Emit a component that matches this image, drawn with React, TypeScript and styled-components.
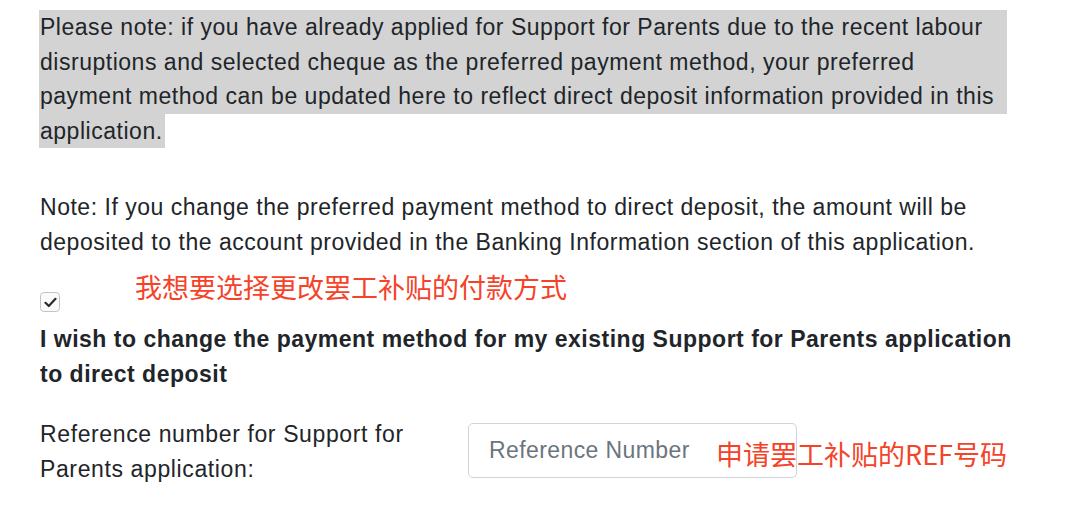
import styled, { createGlobalStyle } from "styled-components";

const GlobalStyle = createGlobalStyle`
  html, body {
    margin: 0;
    background: #ffffff;
  }
`;

const Page = styled.main`
  position: relative;
  width: 1080px;
  height: 512px;
  box-sizing: border-box;
  padding: 10px 40px 0;
  overflow: hidden;
  color: #212529;
  font-family: "Liberation Sans", Arial, sans-serif;
  font-size: 23px;
  line-height: 34.5px;
  letter-spacing: 0.52px;
`;

const Highlighted = styled.p`
  margin: 0 0 42px -1px;
`;

const HighlightBlock = styled.span`
  display: block;
  width: 967px;
  padding-left: 1px;
  background: #d3d3d3;
`;

const HighlightTail = styled.span`
  display: inline-block;
  padding: 0 2px 0 1px;
  background: #d3d3d3;
`;

const Paragraph = styled.p`
  margin: 0 0 33px;
`;

const CheckBox = styled.span`
  display: flex;
  align-items: center;
  justify-content: center;
  width: 20px;
  height: 20px;
  box-sizing: border-box;
  border: 1px solid #c4c4c4;
  border-radius: 4px;
  background: #fbfbfb;
  margin-bottom: 10px;
`;

const BoldLabel = styled.p`
  margin: 0 0 26px;
  font-weight: 700;
  letter-spacing: 0.5px;
`;

const FieldRow = styled.div`
  display: grid;
  grid-template-columns: 428px 329px;
  align-items: start;
`;

const FieldLabel = styled.label`
  display: block;
  letter-spacing: 0.62px;
`;

const Input = styled.input`
  margin-top: 6px;
  width: 329px;
  height: 55px;
  box-sizing: border-box;
  padding: 0 20px;
  border: 1px solid #ced4da;
  border-radius: 5px;
  font-family: inherit;
  font-size: 23px;
  letter-spacing: 0.4px;
  color: #495057;
  background: #fff;

  &::placeholder {
    color: #6c757d;
  }
`;

const Annotation = styled.span<{ $top: number; $left: number }>`
  position: absolute;
  top: ${(p) => p.$top}px;
  left: ${(p) => p.$left}px;
  color: #f5432a;
  font-family: "Noto Sans CJK SC", "Liberation Sans", sans-serif;
  font-size: 27px;
  line-height: 27px;
  letter-spacing: 0;
  white-space: nowrap;
`;

const Check = () => (
  <svg width="13" height="11" viewBox="0 0 13 11">
    <path
      d="M1.5 5.8 L4.8 9 L11.5 1.8"
      fill="none"
      stroke="#2b2b2b"
      strokeWidth="2.2"
      strokeLinecap="round"
      strokeLinejoin="round"
    />
  </svg>
);

const App = () => {
  return (
    <>
      <GlobalStyle />
      <Page>
        <Highlighted>
          <HighlightBlock>
            Please note: if you have already applied for Support for Parents due to the recent labour
            <br />
            disruptions and selected cheque as the preferred payment method, your preferred
            <br />
            payment method can be updated here to reflect direct deposit information provided in this
          </HighlightBlock>
          <HighlightTail>application.</HighlightTail>
        </Highlighted>

        <Paragraph>
          Note: If you change the preferred payment method to direct deposit, the amount will be
          <br />
          deposited to the account provided in the Banking Information section of this application.
        </Paragraph>

        <CheckBox>
          <Check />
        </CheckBox>

        <BoldLabel>
          I wish to change the payment method for my existing Support for Parents application
          <br />
          to direct deposit
        </BoldLabel>

        <FieldRow>
          <FieldLabel htmlFor="ref">
            Reference number for Support for
            <br />
            Parents application:
          </FieldLabel>
          <Input id="ref" placeholder="Reference Number" />
        </FieldRow>

        <Annotation $top={273} $left={135}>我想要选择更改罢工补贴的付款方式</Annotation>
        <Annotation $top={440} $left={716}>申请罢工补贴的REF号码</Annotation>
      </Page>
    </>
  );
};

export default App;
